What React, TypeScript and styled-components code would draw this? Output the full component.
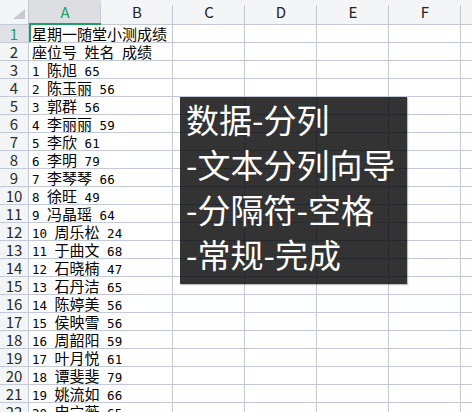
import React from "react";
import styled, { createGlobalStyle, css } from "styled-components";

const GRID = "#c4c9d9";
const GREEN = "#1f9d62";
const HEAD_BG = "#f3f5f7";

const Global = createGlobalStyle`
  html, body { margin: 0; padding: 0; background: #fff; overflow: hidden; }
  #root { width: 472px; height: 412px; }
`;

const Page = styled.div`
  position: relative;
  width: 472px;
  height: 412px;
  overflow: hidden;
  background: #fff;
`;

const Sheet = styled.div`
  display: grid;
  grid-template-columns: 29px repeat(7, 72px);
  grid-template-rows: 25px;
  grid-auto-rows: 18px;
  width: 533px;
  font-family: "Noto Sans CJK SC", "Noto Sans", sans-serif;
`;

const Corner = styled.div`
  box-sizing: border-box;
  background: ${HEAD_BG};
  border-right: 1px solid ${GRID};
  border-bottom: 1px solid ${GRID};
  position: relative;
  &::after {
    content: "";
    position: absolute;
    left: 13px;
    top: 9px;
    width: 12px;
    height: 10px;
    background: #c9cacd;
    clip-path: polygon(100% 0, 100% 100%, 0 100%);
  }
`;

const ColHeader = styled.div<{ $active?: boolean }>`
  box-sizing: border-box;
  position: relative;
  display: flex;
  align-items: center;
  justify-content: center;
  padding-bottom: 1px;
  font-size: 15px;
  color: #222;
  background: ${HEAD_BG};
  border-bottom: 1px solid ${GRID};
  &::after {
    content: "";
    position: absolute;
    right: 0;
    top: 5px;
    bottom: 0;
    width: 1px;
    background: ${GRID};
  }
  ${(p) =>
    p.$active &&
    css`
      background: #dcdee2;
      color: ${GREEN};
      border-bottom: 2px solid ${GREEN};
      padding-bottom: 0;
    `}
`;

const RowHeader = styled.div<{ $active?: boolean }>`
  box-sizing: border-box;
  display: flex;
  align-items: center;
  justify-content: center;
  font-size: 15px;
  line-height: 17px;
  color: #2a2a2a;
  background: ${(p) => (p.$active ? "#dfe1e5" : HEAD_BG)};
  ${(p) => p.$active && `color: ${GREEN};`}
  border-right: 1px solid ${GRID};
  border-bottom: 1px solid ${GRID};
`;

const Cell = styled.div<{ $span?: number; $active?: boolean }>`
  box-sizing: border-box;
  grid-column: span ${(p) => p.$span ?? 1};
  border-right: 1px solid ${GRID};
  border-bottom: 1px solid ${GRID};
  padding-left: 3px;
  font-family: "Noto Sans CJK SC", sans-serif;
  font-size: 15px;
  line-height: 17px;
  color: #000;
  white-space: pre;
  overflow: hidden;
  ${(p) => p.$active && css`box-shadow: inset 2px 0 0 ${GREEN};`}
`;

const Latin = styled.span`
  font-family: "DejaVu Sans Mono", "Liberation Mono", monospace;
  font-size: 12.5px;
`;

const Note = styled.div`
  position: absolute;
  left: 180px;
  top: 97px;
  width: 227px;
  height: 187px;
  box-sizing: border-box;
  padding: 0 0 0 6px;
  background: rgba(0, 0, 0, 0.8);
  box-shadow: 1px 1px 1px rgba(0, 0, 0, 0.25);
  color: #fff;
  font-family: "Noto Sans CJK SC", sans-serif;
  font-size: 33px;
  line-height: 45px;
  white-space: pre;
`;

const NoteLine = styled.div``;

const cols = ["A", "B", "C", "D", "E", "F", "G"];

const rows = [
  "星期一随堂小测成绩",
  "座位号 姓名 成绩",
  "1 陈旭 65",
  "2 陈玉丽 56",
  "3 郭群 56",
  "4 李丽丽 59",
  "5 李欣 61",
  "6 李明 79",
  "7 李琴琴 66",
  "8 徐旺 49",
  "9 冯晶瑶 64",
  "10 周乐松 24",
  "11 于曲文 68",
  "12 石晓楠 47",
  "13 石丹洁 65",
  "14 陈婷美 56",
  "15 侯映雪 56",
  "16 周韶阳 59",
  "17 叶月悦 61",
  "18 谭斐斐 79",
  "19 姚流如 66",
  "20 申宁薇 65",
];

const noteLines = ["数据-分列", "-文本分列向导", "-分隔符-空格", "-常规-完成"];

function CellText({ text }: { text: string }) {
  const parts = text.split(/([\x00-\x7f]+)/).filter((s) => s.length > 0);
  return (
    <>
      {parts.map((p, i) =>
        /^[\x00-\x7f]+$/.test(p) ? <Latin key={i}>{p}</Latin> : <span key={i}>{p}</span>
      )}
    </>
  );
}

export default function App() {
  return (
    <Page>
      <Global />
      <Sheet>
        <Corner />
        {cols.map((c) => (
          <ColHeader key={c} $active={c === "A"}>
            {c}
          </ColHeader>
        ))}
        {rows.map((text, i) => (
          <React.Fragment key={i}>
            <RowHeader $active={i === 0}>{i + 1}</RowHeader>
            <Cell $span={2} $active={i === 0}>
              <CellText text={text} />
            </Cell>
            {cols.slice(2).map((c) => (
              <Cell key={c} />
            ))}
          </React.Fragment>
        ))}
      </Sheet>
      <Note>
        {noteLines.map((l) => (
          <NoteLine key={l}>{l}</NoteLine>
        ))}
      </Note>
    </Page>
  );
}
